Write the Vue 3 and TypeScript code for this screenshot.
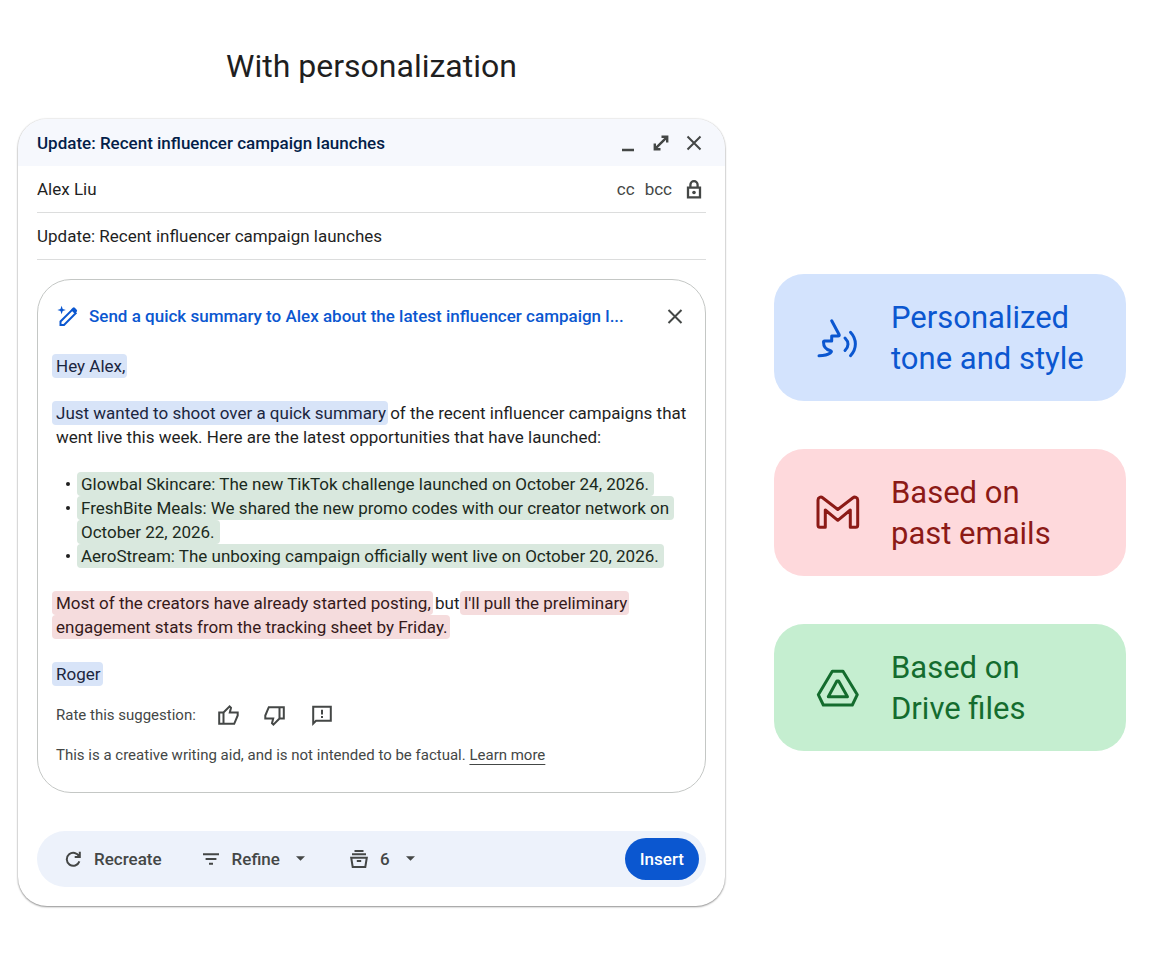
<script setup lang="ts">
import { ref } from 'vue'

interface Source {
  kind: 'tone' | 'email' | 'drive'
  lines: [string, string]
}

const recipient = ref('Alex Liu')
const subject = ref('Update: Recent influencer campaign launches')

const sources: Source[] = [
  { kind: 'tone', lines: ['Personalized', 'tone and style'] },
  { kind: 'email', lines: ['Based on', 'past emails'] },
  { kind: 'drive', lines: ['Based on', 'Drive files'] },
]
</script>

<template>
  <main class="page">
    <h1 class="title">With personalization</h1>

    <section class="composer" aria-label="Compose message">
      <header class="bar">
        <h2 class="bar-title">Update: Recent influencer campaign launches</h2>
        <div class="window-actions">
          <button type="button" class="icon-btn" aria-label="Minimize">
            <svg class="i24" viewBox="0 0 24 24"><path d="M6 19h12" class="s thick" /></svg>
          </button>
          <button type="button" class="icon-btn" aria-label="Expand">
            <svg class="i24" viewBox="0 0 24 24"><path d="M12.5 5.8h5.7v5.7M18.2 5.8 5.8 18.2M5.8 12.5v5.7h5.7" class="s thick" /></svg>
          </button>
          <button type="button" class="icon-btn" aria-label="Close">
            <svg class="i24" viewBox="0 0 24 24"><path d="m5.5 5.5 13 13m0-13-13 13" class="s" /></svg>
          </button>
        </div>
      </header>

      <div class="fields">
        <div class="field">
          <input v-model="recipient" type="text" aria-label="To" />
          <button type="button" class="copy-btn">cc</button>
          <button type="button" class="copy-btn">bcc</button>
          <button type="button" class="icon-btn lock" aria-label="Encryption">
            <svg class="i24" viewBox="0 0 24 24">
              <path d="M6 10.700h12v9.600H6zM8.400 10.400V7.800a3.600 3.600 0 0 1 7.200 0v2.600" class="s lock-line" />
              <circle cx="12" cy="15.500" r="1.800" fill="currentColor" />
            </svg>
          </button>
        </div>
        <div class="field">
          <input v-model="subject" type="text" aria-label="Subject" />
        </div>
      </div>

      <article class="draft">
        <div class="prompt">
          <svg class="i24 pencil" viewBox="0 0 24 24">
            <path d="M5.600 1.800 6.700 4.900 9.800 6 6.700 7.100 5.600 10.200 4.500 7.100 1.400 6 4.500 4.900Z" fill="currentColor" />
            <path d="M4.500 21v-3.500L16.200 5.800l3.500 3.500L8 21Z" class="s" />
            <path d="m15.300 5.300 1.500-1.500q1-.9 2 0l1.900 1.900q.9 1 0 2l-1.500 1.500Z" fill="currentColor" />
          </svg>
          <span class="prompt-text">Send a quick summary to Alex about the latest influencer campaign l...</span>
          <button type="button" class="icon-btn" aria-label="Dismiss">
            <svg class="i24" viewBox="0 0 24 24"><path d="m5.500 6 13 13m0-13-13 13" class="s" /></svg>
          </button>
        </div>

        <div class="message">
          <p><span class="hl blue">Hey Alex,</span></p>
          <p>
            <span class="hl blue">Just wanted to shoot over a quick summary</span> of the recent influencer campaigns that<br />
            went live this week. Here are the latest opportunities that have launched:
          </p>
          <ul>
            <li><span class="hl green">Glowbal Skincare: The new TikTok challenge launched on October 24, 2026.</span></li>
            <li>
              <span class="hl green">FreshBite Meals: We shared the new promo codes with our creator network on</span><br />
              <span class="hl green">October 22, 2026.</span>
            </li>
            <li><span class="hl green">AeroStream: The unboxing campaign officially went live on October 20, 2026.</span></li>
          </ul>
          <p>
            <span class="hl red">Most of the creators have already started posting,</span> but <span class="hl red">I'll pull the preliminary</span><br />
            <span class="hl red">engagement stats from the tracking sheet by Friday.</span>
          </p>
          <p><span class="hl blue">Roger</span></p>
        </div>

        <div class="rating">
          <span class="rating-label">Rate this suggestion:</span>
          <button type="button" class="icon-btn" aria-label="Good suggestion">
            <svg class="i24" viewBox="0 0 24 24"><path d="M3.2 9.5h4.3v11.3H3.2zM7.5 9.5l6.1-6.2L15 4.700l-1.200 4.800h7.900v3l-3.500 8.300H7.500" class="s" /></svg>
          </button>
          <button type="button" class="icon-btn" aria-label="Bad suggestion">
            <svg class="i24" viewBox="0 0 24 24"><path d="M20.800 15.500h-4.300V4.200h4.300zM16.500 15.500l-6.100 6.200L9 20.300l1.200-4.800H2.300v-3l3.500-8.300h10.700" class="s" /></svg>
          </button>
          <button type="button" class="icon-btn" aria-label="Send feedback">
            <svg class="i24" viewBox="0 0 24 24">
              <path d="M3.200 20.600V3.800h17.600v14H6Z" class="s" />
              <path d="M12 6.800v4.600M12 13v2" class="s" />
            </svg>
          </button>
        </div>

        <p class="notice">This is a creative writing aid, and is not intended to be factual. <a href="#">Learn more</a></p>
      </article>

      <footer class="toolbar">
        <button type="button" class="tool">
          <svg class="i24" viewBox="0 0 24 24"><path d="M18.200 9.600A6.500 6.500 0 1 0 18.400 14.400M18.800 4.800v5.100h-5.100" class="s" /></svg>
          Recreate
        </button>
        <button type="button" class="tool refine" aria-haspopup="menu">
          <svg class="i24" viewBox="0 0 24 24"><path d="M4 7.300h16M6.600 12h10.800M10 16.700h4" class="s" /></svg>
          Refine
          <svg class="caret" viewBox="0 0 10 6"><path d="M0 0h10L5 5Z" fill="currentColor" /></svg>
        </button>
        <button type="button" class="tool count" aria-haspopup="menu" aria-label="6 versions">
          <svg class="i24" viewBox="0 0 24 24"><path d="M7.500 4h9M5 7.300h14M4.200 10.700h15.600L18.300 20H5.700ZM9.800 14h4.400" class="s" /></svg>
          6
          <svg class="caret" viewBox="0 0 10 6"><path d="M0 0h10L5 5Z" fill="currentColor" /></svg>
        </button>
        <button type="button" class="insert">Insert</button>
      </footer>
    </section>

    <aside class="sources">
      <div v-for="source in sources" :key="source.kind" class="source" :class="source.kind">
        <svg v-if="source.kind === 'tone'" viewBox="0 0 48 48">
          <path d="m17.700 6.800 7.500 14c.3.800-.2 1.200-1 1.200h-6.500v5H10.500q-1 0-1 1c0 5.500 3.200 7.600 6.500 8.500 2 .6 1.800 1.400.3 2.500-2.800 2.100-6.300 2.700-11.300 2.700M31 24c4 4 4 8.500 0 12.500M36.500 18.300c6.500 7 6.500 16.400 0 23.400" />
        </svg>
        <svg v-else-if="source.kind === 'email'" viewBox="0 0 48 48">
          <path d="M11.300 38.300H6q-2 0-2-2V11c0-2.800 3-3.500 4.600-2.300l15.200 11.800L39 8.700c1.700-1.200 4.700-.4 4.700 2.300v25.300q0 2-2 2h-5.400V21L23.800 31.300 11.300 21Z" />
        </svg>
        <svg v-else viewBox="0 0 48 48">
          <path d="M18.300 7.300H29l14.300 23.400L38.300 41h-29l-5-10.300ZM22.900 17h1.700l8.900 15.700H14.300Z" />
        </svg>
        <p>{{ source.lines[0] }}<br />{{ source.lines[1] }}</p>
      </div>
    </aside>
  </main>
</template>

<style>
body {
  margin: 0;
  background: #fff;
}
</style>

<style scoped>
.page {
  display: grid;
  grid-template-columns: 707fr 352fr;
  column-gap: 49px;
  padding: 42px 43px 48px 18px;
  color: #1f1f1f;
  font-family: Roboto, "Liberation Sans", sans-serif;
  font-size: 17px;
  line-height: 24px;
}

h1,
h2,
p,
ul {
  margin: 0;
  padding: 0;
}

button,
input {
  padding: 0;
  border: 0;
  background: none;
  color: inherit;
  font: inherit;
}

button {
  cursor: pointer;
}

.title {
  grid-column: 1;
  margin-bottom: 29px;
  font-size: 32px;
  font-weight: 400;
  line-height: 48px;
  text-align: center;
}

.composer {
  grid-column: 1;
  overflow: hidden;
  padding-bottom: 19px;
  border-radius: 29px;
  background: #fff;
  box-shadow: 0 1px 2px rgba(0, 0, 0, 0.4), 0 0 2px rgba(0, 0, 0, 0.2);
}

.bar {
  display: flex;
  align-items: center;
  justify-content: space-between;
  height: 47px;
  padding: 0 19px;
  background: #f6f8fd;
}

.bar-title {
  color: #041e49;
  font-size: 17px;
  font-weight: 500;
}

.window-actions {
  display: flex;
  gap: 9px;
  color: #444746;
}

.icon-btn {
  display: block;
  flex: none;
  width: 24px;
  height: 24px;
  color: #444746;
}

.i24 {
  display: block;
  flex: none;
  width: 24px;
  height: 24px;
}

.s {
  fill: none;
  stroke: currentColor;
  stroke-width: 2;
}

.thick {
  stroke-width: 2.4;
}

.lock-line {
  stroke-width: 2.3;
}

.fields {
  padding: 0 19px;
}

.field {
  display: flex;
  align-items: center;
  height: 46px;
  border-bottom: 1px solid #dcdddd;
}

.field input {
  flex: 1;
  min-width: 0;
  outline: 0;
}

.copy-btn {
  margin-left: 10px;
  color: #444746;
}

.lock {
  margin-left: 10px;
}

.draft {
  margin: 19px 19px 38px;
  padding: 24px 18px 25px;
  border: 1px solid #c4c7c5;
  border-radius: 34px;
}

.prompt {
  display: flex;
  align-items: center;
  margin-bottom: 26px;
}

.pencil {
  color: #0b57d0;
}

.prompt-text {
  flex: 1;
  min-width: 0;
  margin-left: 9px;
  color: #0b57d0;
  font-weight: 500;
  white-space: nowrap;
}

.message {
  display: grid;
  gap: 23px;
  white-space: nowrap;
}

.message ul {
  padding-left: 25px;
  list-style: none;
}

.message li {
  position: relative;
}

.message li::before {
  position: absolute;
  left: -15px;
  top: 10px;
  width: 4px;
  height: 4px;
  border-radius: 50%;
  background: #1f1f1f;
  content: "";
}

.hl {
  margin: 0 -2px 0 -4px;
  padding: 2px 2px 2px 4px;
  border-radius: 4px;
}

.blue {
  background: #d8e4f8;
  color: #1b2640;
}

.green {
  padding-right: 5px;
  background: #d9e8de;
  color: #1b2a20;
}

.red {
  background: #f5dcdd;
  color: #35191a;
}

.rating {
  display: flex;
  align-items: center;
  margin-top: 17px;
  color: #444746;
  font-size: 15px;
}

.rating-label {
  flex: none;
  width: 160px;
}

.rating .icon-btn + .icon-btn {
  margin-left: 23px;
}

.notice {
  margin-top: 16px;
  color: #444746;
  font-size: 15px;
}

.notice a {
  color: inherit;
  text-underline-offset: 4px;
}

.toolbar {
  display: flex;
  align-items: center;
  height: 56px;
  margin: 0 19px;
  padding: 0 7px 0 24px;
  border-radius: 28px;
  background: #edf2fb;
}

.tool {
  display: flex;
  align-items: center;
  gap: 9px;
  color: #444746;
  font-weight: 500;
}

.caret {
  width: 9px;
  height: 6px;
  margin-left: 7px;
}

.refine {
  margin-left: 37px;
}

.count {
  margin-left: 42px;
}

.insert {
  height: 42px;
  margin-left: auto;
  padding: 0 15px;
  border-radius: 21px;
  background: #0b57d0;
  color: #fff;
  font-weight: 500;
}

.sources {
  display: flex;
  grid-column: 2;
  flex-direction: column;
  justify-content: center;
  gap: 48px;
}

.source {
  display: flex;
  align-items: center;
  gap: 29px;
  height: 127px;
  padding-left: 40px;
  border-radius: 30px;
}

.source svg {
  flex: none;
  width: 48px;
  height: 48px;
  fill: none;
  stroke: currentColor;
  stroke-linecap: round;
  stroke-linejoin: round;
  stroke-width: 3;
}

.source p {
  font-size: 31px;
  line-height: 41px;
  white-space: nowrap;
}

.tone {
  background: #d3e3fd;
  color: #0b57d0;
}

.email {
  background: #fed9dc;
  color: #8c1a16;
}

.drive {
  background: #c5eed0;
  color: #146c2e;
}
</style>
